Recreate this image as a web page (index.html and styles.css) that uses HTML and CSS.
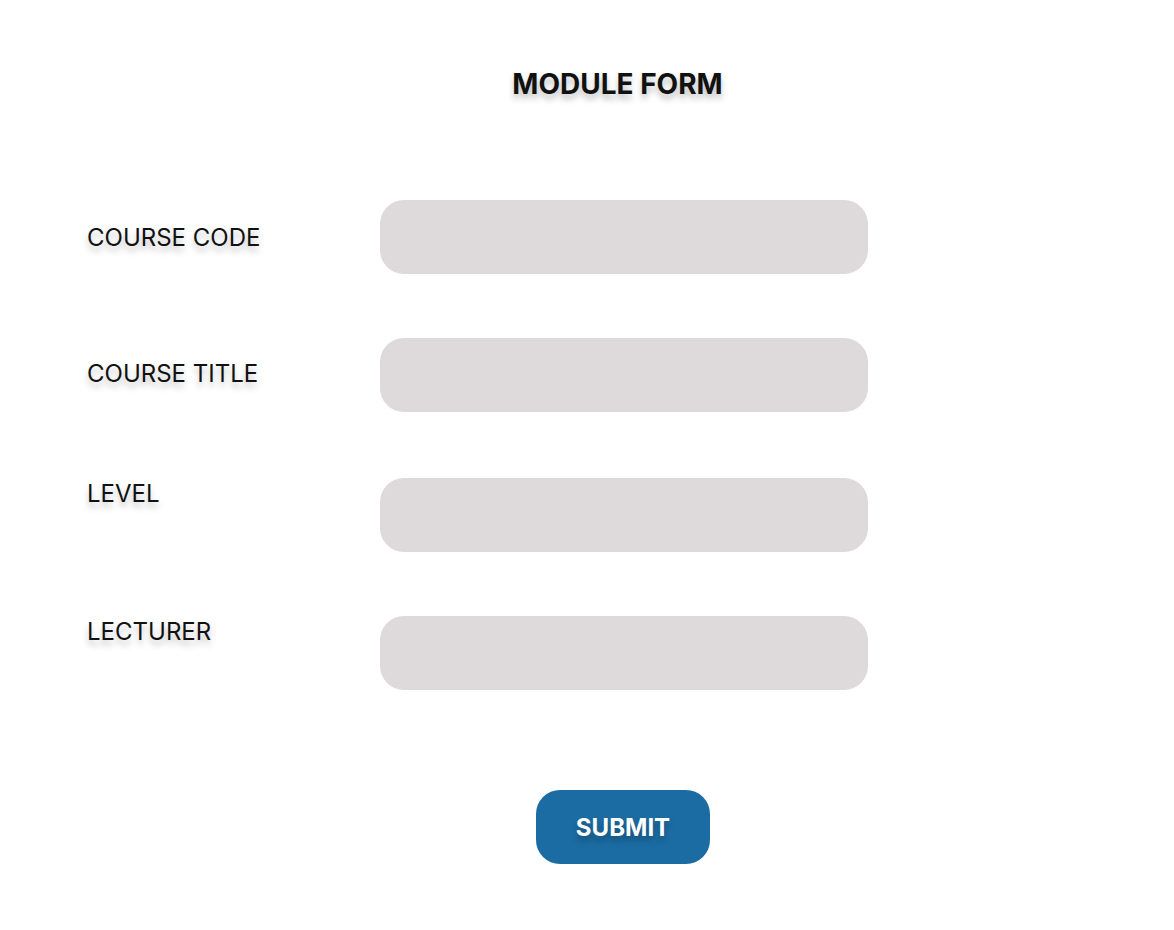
FILE: index.html
```html
<!DOCTYPE html>
<html lang="en">
<head>
<meta charset="utf-8">
<title>Module Form</title>
<link rel="stylesheet" href="styles.css">
</head>
<body>
<main class="page">
  <h1 class="title">MODULE FORM</h1>
  <form class="form">
    <div class="row row--center">
      <label class="label" for="code">COURSE CODE</label>
      <input class="field" id="code" type="text">
    </div>
    <div class="row row--center">
      <label class="label label--up" for="title">COURSE TITLE</label>
      <input class="field" id="title" type="text">
    </div>
    <div class="row row--top row--wide">
      <label class="label" for="level">LEVEL</label>
      <input class="field" id="level" type="text">
    </div>
    <div class="row row--top">
      <label class="label" for="lecturer">LECTURER</label>
      <input class="field" id="lecturer" type="text">
    </div>
    <div class="actions">
      <button class="submit" type="button">SUBMIT</button>
    </div>
  </form>
</main>
</body>
</html>
```
FILE: styles.css
```css
* { box-sizing: border-box; }
html, body { margin: 0; padding: 0; background: #ffffff; }
body {
  font-family: Inter, "Noto Sans", "Liberation Sans", sans-serif;
  color: #111111;
}
.page {
  margin: 0 26px 0 87px;
  padding-top: 67px;
}
.title {
  margin: 0;
  text-align: center;
  font-size: 28px;
  line-height: 34px;
  font-weight: 700;
  color: #111111;
  text-shadow: 0 5px 6px rgba(0, 0, 0, 0.25);
}
.form {
  margin-top: 99px;
  display: flex;
  flex-direction: column;
  gap: 64px;
}
.row {
  display: flex;
}
.row--center { align-items: center; }
.row--top { align-items: flex-start; }
.row--wide { margin-top: 2px; }
.label {
  width: 293px;
  flex: none;
  font-size: 24px;
  line-height: 29px;
  font-weight: 400;
  color: #111111;
  text-shadow: 0 5px 6px rgba(0, 0, 0, 0.25);
}
.label--up { margin-top: -3px; }
.row--top .label { margin-top: 1px; }
.field {
  width: 488px;
  height: 74px;
  border: none;
  border-radius: 24px;
  background: #dedadb;
  outline: none;
  padding: 0 24px;
  font: inherit;
}
.actions {
  margin-top: 36px;
  margin-left: 293px;
  width: 486px;
  display: flex;
  justify-content: center;
}
.submit {
  width: 174px;
  height: 74px;
  border: none;
  border-radius: 24px;
  background: #1b6ca3;
  color: #ffffff;
  font-family: inherit;
  font-size: 24px;
  font-weight: 700;
  text-shadow: 0 5px 6px rgba(0, 0, 0, 0.25);
  cursor: pointer;
}
```
